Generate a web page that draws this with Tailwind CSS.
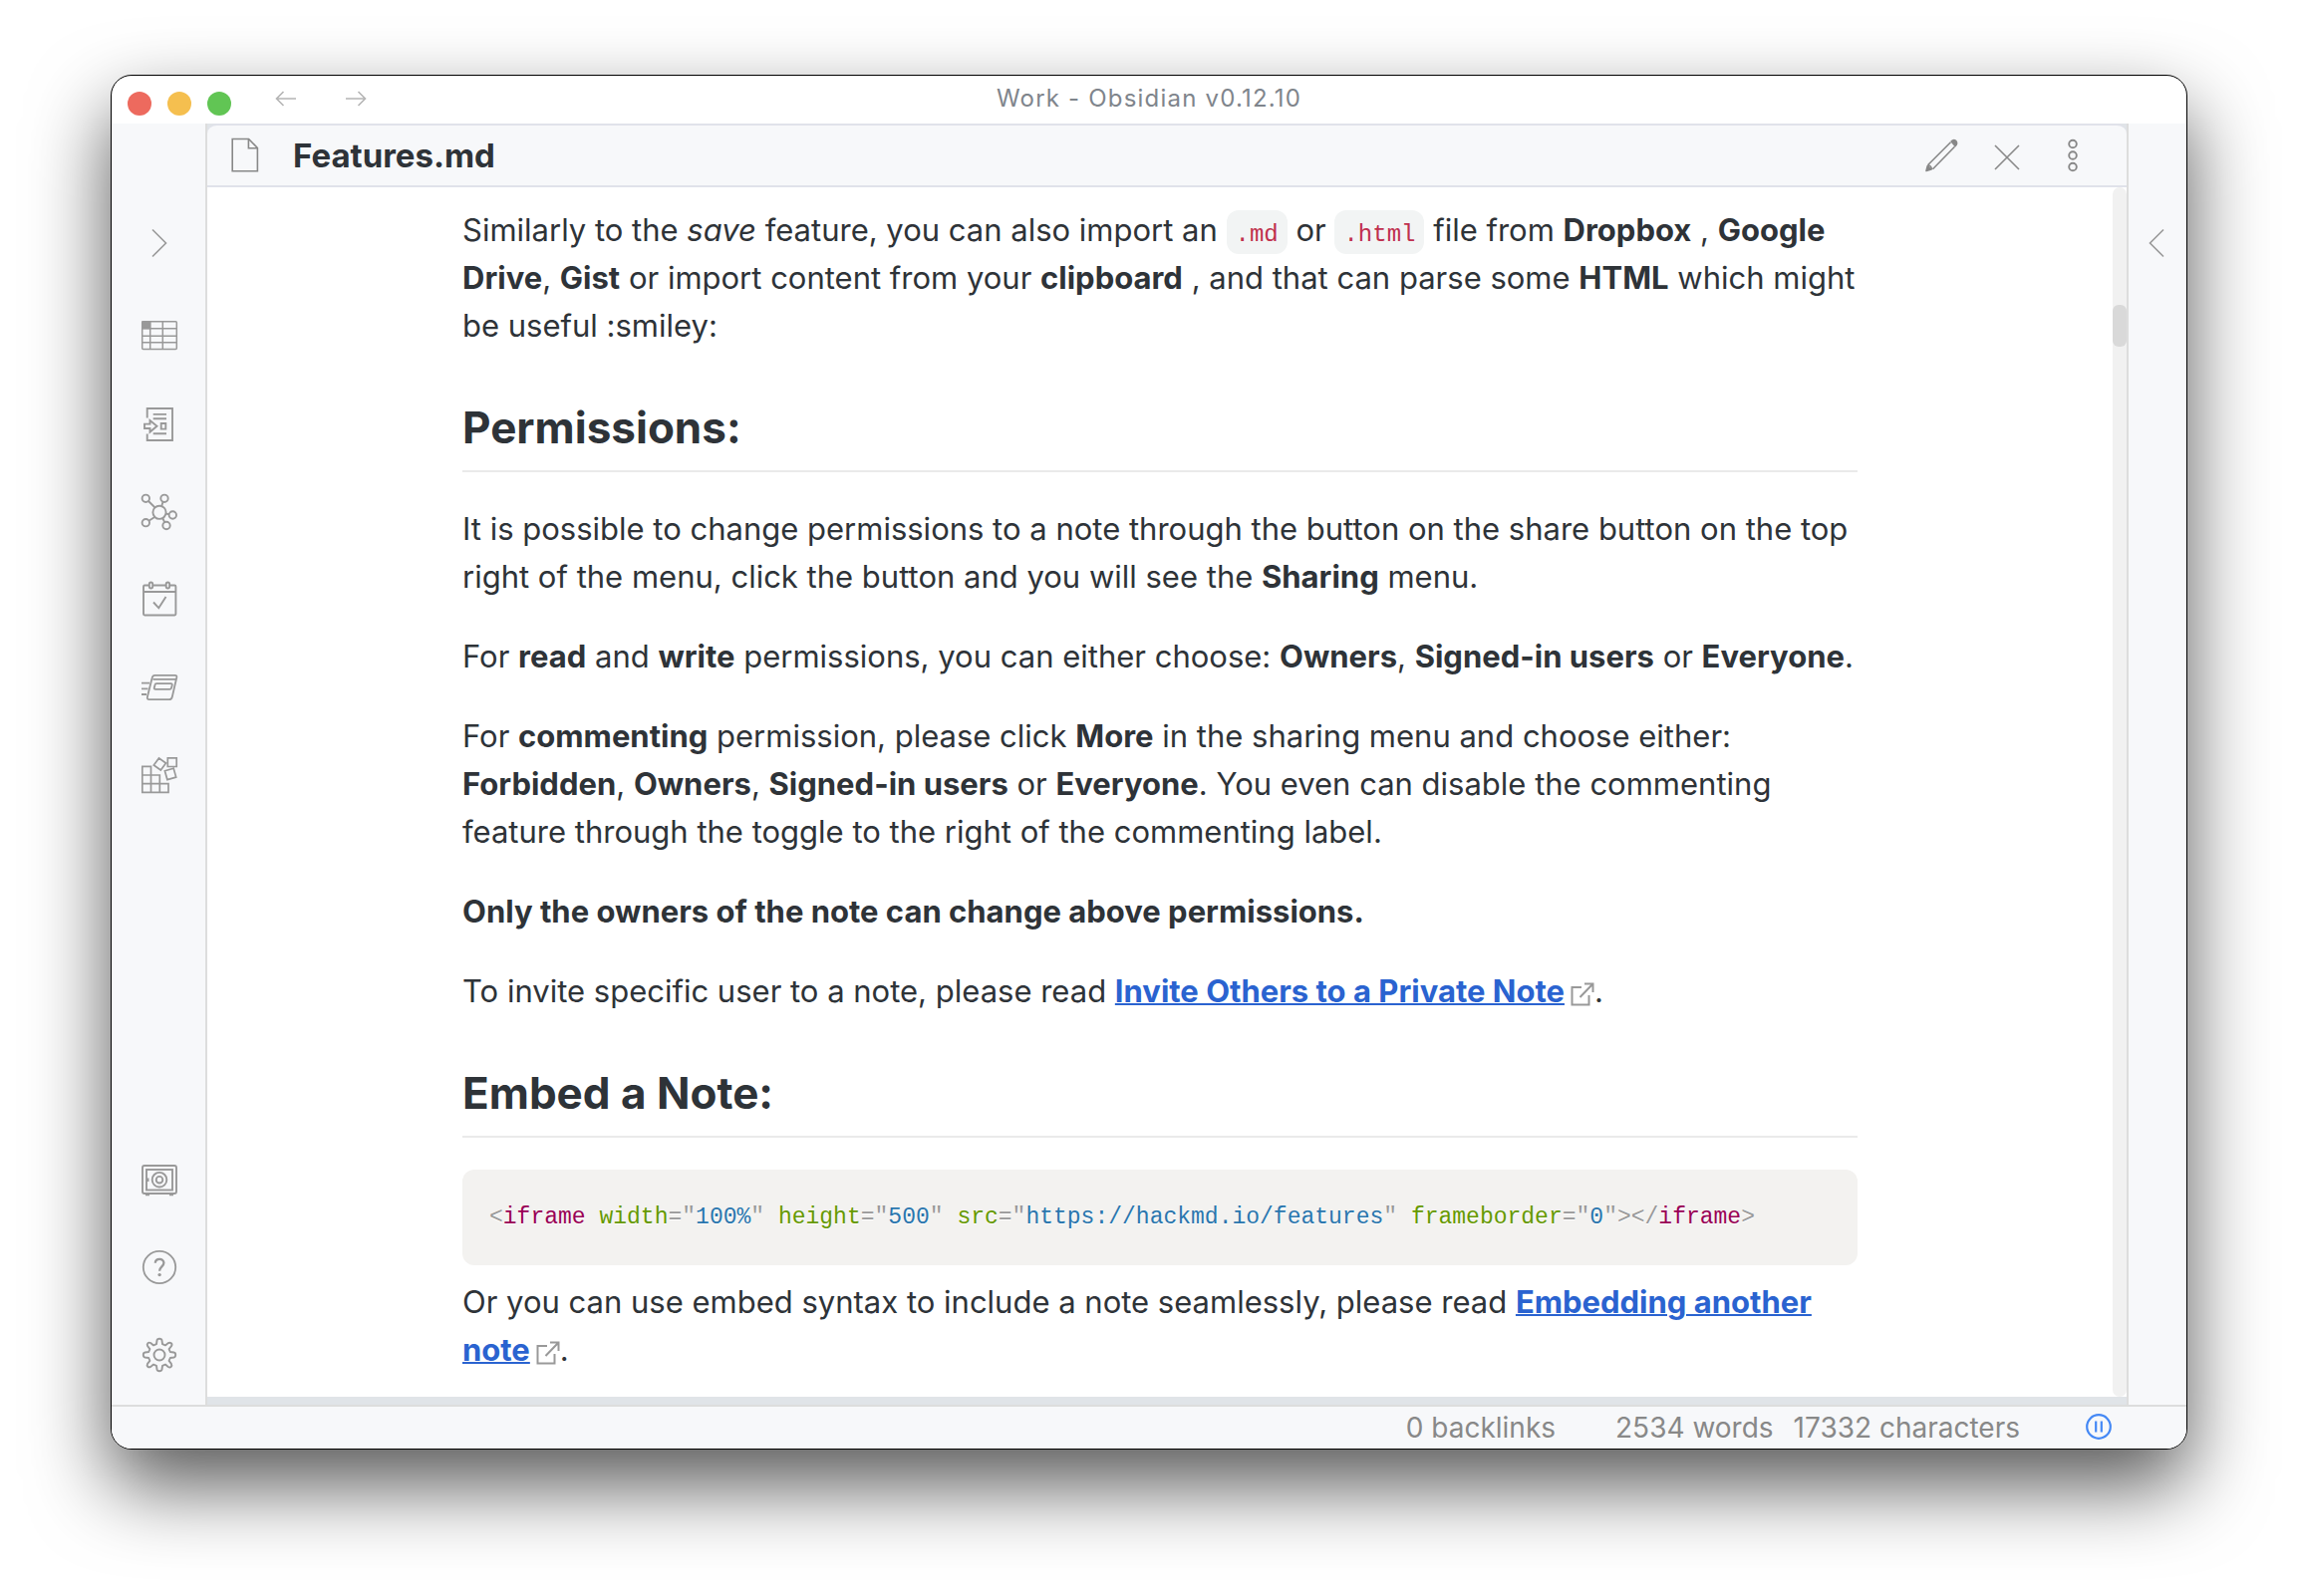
<!DOCTYPE html>
<html lang="en">
<head>
<meta charset="utf-8">
<title>Work - Obsidian v0.12.10</title>
<script src="https://cdn.jsdelivr.net/npm/@tailwindcss/browser@4"></script>
</head>
<body class="flex h-screen bg-white px-[111px] pt-[75px] pb-[147px] font-[Inter,sans-serif] text-[#2e3338]">
<div class="flex min-w-0 flex-1 flex-col overflow-hidden rounded-[21px] border border-black bg-white shadow-[0_36px_80px_rgba(0,0,0,0.66)]">

  <!-- Title bar -->
  <header class="grid h-12 shrink-0 grid-cols-3">
    <div class="flex items-start">
      <div class="flex gap-4 pt-4 pl-4">
        <button aria-label="Close window" class="size-6 rounded-full bg-[#ed6a5e]"></button>
        <button aria-label="Minimize window" class="size-6 rounded-full bg-[#f5bf4f]"></button>
        <button aria-label="Zoom window" class="size-6 rounded-full bg-[#61c554]"></button>
      </div>
      <div class="flex gap-[46px] pt-3 pl-[43px]">
        <button aria-label="Back" class="h-6 w-6"><svg class="size-6" viewBox="0 0 24 24" fill="none" stroke="#b5b5b5" stroke-width="1.6"><path d="M22 11H2.500M9.500 4l-7 7 7 7"/></svg></button>
        <button aria-label="Forward" class="h-6 w-6"><svg class="size-6" viewBox="0 0 24 24" fill="none" stroke="#b5b5b5" stroke-width="1.6"><path d="M2 11h19.500M14.500 4l7 7-7 7"/></svg></button>
      </div>
    </div>
    <div class="flex items-center justify-center pb-0.5 text-2xl tracking-wider whitespace-nowrap text-[#7f858c]">Work - Obsidian v0.12.10</div>
  </header>

  <div class="flex min-h-0 flex-1">
    <!-- Left ribbon -->
    <nav class="flex w-24 shrink-0 flex-col items-center border-r-2 border-[#ddd] bg-[#f7f8fa] pt-[76px] pb-[6px] pl-0.5">
      <button aria-label="Expand" class="mb-[5px] flex h-[88px] items-center"><svg class="size-11" viewBox="0 0 44 44" fill="none" stroke="#999" stroke-width="1.6"><path d="M15 8.500l13.500 13.500L15 35.500"/></svg></button>
      <button aria-label="Tables" class="flex h-[88px] items-center"><svg class="size-11" viewBox="0 0 44 44" fill="none" stroke="#999" stroke-width="1.5"><rect x="4.700" y="7.700" width="34.600" height="27.800" rx="1"/><path d="M12.700 8v27.500M25.300 8v27.500M5 14.700h34M5 22.300h34M5 28.700h34"/><path d="M5 8h7.500v6.500H5z" fill="#999"/></svg></button>
      <button aria-label="Quick switcher" class="flex h-[88px] items-center"><svg class="size-11" viewBox="0 0 44 44" fill="none" stroke="#999" stroke-width="1.9"><path d="M9.700 16.500V7H35v32H9.700v-6.500M15.700 12.900H29M15.700 17.200H29M15.700 32.300H29M7 22.600h5.500V19l7 5.700-7 5.900V27H7zM23.700 22h4.600v5.600h-4.600z"/></svg></button>
      <button aria-label="Graph view" class="flex h-[88px] items-center"><svg class="size-11" viewBox="0 0 44 44" fill="none" stroke="#999" stroke-width="1.9"><circle cx="22" cy="23.300" r="6.600"/><circle cx="8.300" cy="9.300" r="3.700"/><circle cx="27" cy="9.300" r="3.700"/><circle cx="35.300" cy="26" r="3.700"/><circle cx="29" cy="36.500" r="3.700"/><circle cx="8.300" cy="33.700" r="3.700"/><path d="M11 12l6.500 6.500M25.500 12.800l-1.300 4.200M28.500 24.600l3.200.6M25.300 29.200l1.800 4M17.200 28l-5.800 3.700"/></svg></button>
      <button aria-label="Daily note" class="flex h-[88px] items-center"><svg class="size-11" viewBox="0 0 44 44" fill="none" stroke="#999" stroke-width="1.9"><path d="M11.500 8.500H7A1.200 1.200 0 0 0 6 9.700v27.600a1.200 1.200 0 0 0 1.200 1.200h30a1.200 1.200 0 0 0 1.200-1.200V9.700a1.200 1.200 0 0 0-1.200-1.200h-5M15.500 8.500h12.700M6 15h32.500M16 25.500l5.300 5.800L28.500 20"/><rect x="11.800" y="5.500" width="3.400" height="6" rx="1.700"/><rect x="28.700" y="5.500" width="3.400" height="6" rx="1.700"/></svg></button>
      <button aria-label="Flashcards" class="flex h-[88px] items-center"><svg class="size-11" viewBox="0 0 44 44" fill="none" stroke="#999" stroke-width="1.8"><path d="M17.500 10.800h20q2.200 0 1.800 2.200l-4.500 19.500q-.6 2.700-3 2.700h-20q-2.500 0-1.900-2.700l4.700-19q.6-2.700 2.900-2.700zM15.500 14.900h23.500M19 19.200h14.500q1.600 0 1.200 1.500l-.6 2.500q-.4 1.600-1.900 1.600H18q-1.600 0-1.200-1.600l.6-2.500q.3-1.500 1.600-1.500zM4 18.700h8M4 24.300h6.500M4 30h5"/></svg></button>
      <button aria-label="Plugins" class="flex h-[88px] items-center"><svg class="size-11" viewBox="0 0 44 44" fill="none" stroke="#999" stroke-width="1.7"><path d="M4.800 14.300h8.700v26H4.800zM4.800 23h17.500v17.300M4.800 31.600H31v8.700H13.500M22.300 31.600v8.700M21.500 6l7 5-5.200 7-7-5zM30.300 5.800h8.900v8.700h-8.900zM27.400 18.800l8.800-2.500 2.500 8.800-8.800 2.500z"/></svg></button>
      <button aria-label="Open another vault" class="mt-auto flex h-[88px] items-center"><svg class="size-11" viewBox="0 0 44 44" fill="none" stroke="#999" stroke-width="1.9"><rect x="5" y="8" width="34" height="28" rx="2"/><rect x="9" y="12" width="26" height="20.500"/><circle cx="22" cy="22.200" r="7.300"/><circle cx="22" cy="22.200" r="3.300"/><path d="M8 37.200h4M32 37.200h4M10.500 20.500v3.500"/></svg></button>
      <button aria-label="Help" class="flex h-[88px] items-center"><svg class="size-11" viewBox="0 0 44 44" fill="none" stroke="#999" stroke-width="1.8"><circle cx="22" cy="22" r="16.200"/><path d="M17.800 17.800c.2-5.300 8.600-5.200 8.600-.2 0 3.800-4.300 3.900-4.300 8.200" stroke-width="2.300"/><circle cx="22.100" cy="29.600" r="1.700" fill="#999" stroke="none"/></svg></button>
      <button aria-label="Settings" class="flex h-[88px] items-center"><svg class="size-11" viewBox="0 0 44 44" fill="none" stroke="#999" stroke-width="1.9" stroke-linejoin="round"><circle cx="22" cy="22" r="5.500"/><path d="M19.500 7.500Q19.700 5.800 22 5.800T24.500 7.500L25 11.200L27.900 12.400L30.900 10.100Q32.500 9.200 33.800 10.300T34 13.200L31.600 16.100L32.800 19L36.500 19.500Q38.200 19.800 38.200 22T36.500 24.500L32.800 25L31.600 27.900L33.900 30.900Q34.800 32.500 33.700 33.800T30.800 34L27.900 31.600L25 32.800L24.500 36.500Q24.200 38.200 22 38.200T19.500 36.500L19 32.800L16.100 31.600L13.100 33.900Q11.500 34.800 10.300 33.700T10 30.800L12.400 27.900L11.200 25L7.500 24.500Q5.800 24.200 5.800 22T7.500 19.500L11.200 19L12.400 16.100L10.100 13.100Q9.200 11.500 10.300 10.300T13.200 10L16.100 12.400L19 11.200Z"/></svg></button>
    </nav>

    <!-- Note pane -->
    <main class="flex min-w-0 flex-1 flex-col bg-[#e0e4e8] pb-2">
      <div class="flex h-16 shrink-0 items-center rounded-t-[10px] border-y-2 border-[#e0e2ea] bg-[#f7f8fa] pr-[32px] pl-[16px]">
        <svg class="size-11" viewBox="0 0 44 44" fill="none" stroke="#888" stroke-width="1.6"><path d="M9.200 5.500h16.400l8.800 9v23.200H9.200zM25.400 5.500v9.200h9"/></svg>
        <h1 class="ml-[26px] flex-1 text-[33px] leading-[48px] font-bold">Features.md</h1>
        <div class="flex gap-[22px]">
          <button aria-label="Edit"><svg class="size-11" viewBox="0 0 44 44" fill="none" stroke="#888" stroke-width="1.6" stroke-linejoin="round"><path d="M8.500 31.800L31.500 8.800M13.500 35.800L35.500 13.300M8.500 31.800q3.500.5 4 4.200"/><path d="M7 37.500l1.300-5 3.700 3.600zM32.200 7.900q2-2 4.200-.8 1.900 1.800.8 4.200l-1.200 1.300z" fill="#888"/></svg></button>
          <button aria-label="Close"><svg class="size-11" viewBox="0 0 44 44" fill="none" stroke="#888" stroke-width="1.6"><path d="M10 12l24 24M34 12L10 36"/></svg></button>
          <button aria-label="More options"><svg class="size-11" viewBox="0 0 44 44" fill="none" stroke="#888" stroke-width="1.9"><circle cx="22" cy="10.500" r="3.800"/><circle cx="22" cy="22" r="3.800"/><circle cx="22" cy="33.500" r="3.800"/></svg></button>
        </div>
      </div>

      <div class="flex min-h-0 flex-1 bg-white">
        <article class="min-w-0 flex-1 overflow-hidden pt-[19px] text-[31px] leading-[48px]">
          <div class="mx-auto flex max-w-[1400px] flex-col">
            <p>Similarly to the <em>save</em> feature, you can also import an <code class="rounded-xl bg-[#f2f4f4] px-[9px] pt-[11px] pb-[6px] font-['Liberation_Mono',monospace] text-2xl text-[#c0304e]">.md</code> or <code class="rounded-xl bg-[#f2f4f4] px-[9px] pt-[11px] pb-[6px] font-['Liberation_Mono',monospace] text-2xl text-[#c0304e]">.html</code> file from <b>Dropbox</b> , <b>Google Drive</b>, <b>Gist</b> or import content from your <b>clipboard</b> , and that can parse some <b>HTML</b> which might be useful :smiley:</p>
            <h2 class="mt-12 border-b-2 border-[#eaeaea] pb-[13px] text-[44px] leading-[60px] font-bold">Permissions:</h2>
            <p class="mt-[33px]">It is possible to change permissions to a note through the button on the share button on the top right of the menu, click the button and you will see the <b>Sharing</b> menu.</p>
            <p class="mt-8">For <b>read</b> and <b>write</b> permissions, you can either choose: <b>Owners</b>, <b>Signed-in users</b> or <b>Everyone</b>.</p>
            <p class="mt-8">For <b>commenting</b> permission, please click <b>More</b> in the sharing menu and choose either: <b>Forbidden</b>, <b>Owners</b>, <b>Signed-in users</b> or <b>Everyone</b>. You even can disable the commenting feature through the toggle to the right of the commenting label.</p>
            <p class="mt-8"><b>Only the owners of the note can change above permissions.</b></p>
            <p class="mt-8">To invite specific user to a note, please read <a href="#" class="font-bold text-[#2a63d0] underline decoration-2">Invite Others to a Private Note</a><svg class="ml-[6px] inline size-6 align-[-4px]" viewBox="0 0 24 24" fill="none" stroke="#999" stroke-width="2"><path d="M11 5H1.500v17.500h17V13M14 1.500h8.500V10M22.500 1.500L9.500 15"/></svg>.</p>
            <h2 class="mt-12 border-b-2 border-[#eaeaea] pb-[13px] text-[44px] leading-[60px] font-bold">Embed a Note:</h2>
            <pre class="mt-8 rounded-xl bg-[#f3f2f0] px-[27px] py-6 font-['Liberation_Mono',monospace] text-[23px] text-[#999] text-shadow-[0_1px_white]">&lt;<span class="text-[#905]">iframe</span> <span class="text-[#690]">width</span>="<span class="text-[#2a76ae]">100%</span>" <span class="text-[#690]">height</span>="<span class="text-[#2a76ae]">500</span>" <span class="text-[#690]">src</span>="<span class="text-[#2a76ae]">https://hackmd.io/features</span>" <span class="text-[#690]">frameborder</span>="<span class="text-[#2a76ae]">0</span>"&gt;&lt;/<span class="text-[#905]">iframe</span>&gt;</pre>
            <p class="mt-[13px]">Or you can use embed syntax to include a note seamlessly, please read <a href="#" class="font-bold text-[#2a63d0] underline decoration-2">Embedding another note</a><svg class="ml-[6px] inline size-6 align-[-4px]" viewBox="0 0 24 24" fill="none" stroke="#999" stroke-width="2"><path d="M11 5H1.500v17.500h17V13M14 1.500h8.500V10M22.500 1.500L9.500 15"/></svg>.</p>
          </div>
        </article>
        <!-- Scroll track -->
        <div class="w-[14px] shrink-0 rounded-full bg-[#f1f1f1] pt-[118px]"><div class="h-[42px] rounded-md bg-[#d9d9d9]"></div></div>
      </div>
    </main>

    <!-- Right ribbon -->
    <aside class="flex w-[60px] shrink-0 flex-col items-center border-l-2 border-[#ddd] bg-[#f7f8fa] pt-[76px]">
      <button aria-label="Expand right sidebar" class="flex h-[88px] items-center"><svg class="size-11" viewBox="0 0 44 44" fill="none" stroke="#999" stroke-width="1.6"><path d="M28 8.500L14.500 22 28 35.500"/></svg></button>
    </aside>
  </div>

  <!-- Status bar -->
  <footer class="flex h-11 shrink-0 items-center justify-end border-t-2 border-[#ddd] bg-[#f7f8fa] pr-[74px] text-[28px] leading-[41px] text-[#888]">
    <span>0 backlinks</span>
    <span class="ml-[60px]">2534 words</span>
    <span class="ml-5">17332 characters</span>
    <button aria-label="Sync paused" class="ml-[65px]"><svg class="size-7" viewBox="0 0 28 28" fill="none" stroke="#4488f5" stroke-width="2.200"><circle cx="14" cy="13" r="11.800"/><path d="M11.200 7.500v11M16.800 7.500v11"/></svg></button>
  </footer>
</div>
</body>
</html>
